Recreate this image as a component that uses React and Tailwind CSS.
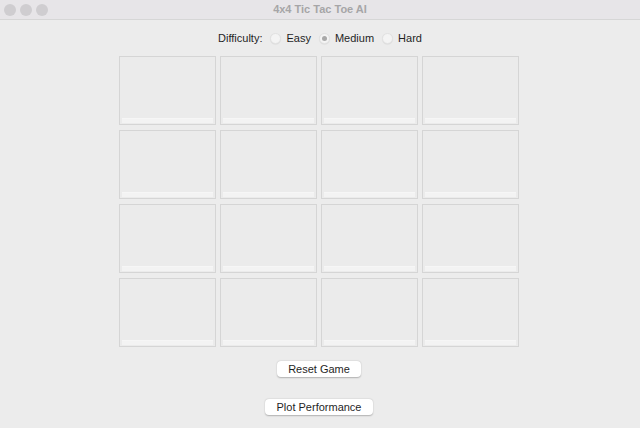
import React, { useState } from 'react';

function Radio({ label, checked, onSelect }) {
  return (
    <label className="flex items-center gap-[5px] cursor-default" onClick={onSelect}>
      <span className="w-[11px] h-[11px] rounded-full bg-[#f4f4f4] border border-[#e2e2e2] shadow-[0_0.5px_1px_rgba(0,0,0,0.08)] flex items-center justify-center">
        {checked && <span className="w-[5px] h-[5px] rounded-full bg-[#a9a9a9]" />}
      </span>
      <span>{label}</span>
    </label>
  );
}

function Cell() {
  return (
    <div className="w-[97px] h-[69px] border border-[#d5d5d5] bg-[#ebebeb] flex flex-col">
      <div className="flex-1" />
      <div className="h-[5px] mx-[2px] mb-[1px] bg-[#f3f3f3] border-t border-[#f6f6f6]" />
    </div>
  );
}

export default function App() {
  const [difficulty, setDifficulty] = useState('Medium');
  const cells = Array.from({ length: 16 });

  return (
    <div className="w-[640px] h-[428px] bg-[#ececec] flex flex-col overflow-hidden" style={{ fontFamily: '"Liberation Sans", Arial, sans-serif' }}>
      <div className="h-[20px] bg-[#e7e5e8] border-b border-[#d6d6d6] flex items-center relative">
        <div className="flex items-center gap-[4px] pl-[4px]">
          <span className="w-[12px] h-[12px] rounded-full bg-[#cfcdd0]" />
          <span className="w-[12px] h-[12px] rounded-full bg-[#cfcdd0]" />
          <span className="w-[12px] h-[12px] rounded-full bg-[#cfcdd0]" />
        </div>
        <div className="flex-1 text-center text-[11px] font-bold text-[#a6a5a7] pr-[48px]">4x4 Tic Tac Toe AI</div>
      </div>

      <div className="flex justify-center items-center gap-[8px] mt-[10px] h-[16px] text-[11px] text-[#1f1f1f]">
        <span>Difficulty:</span>
        {['Easy', 'Medium', 'Hard'].map((d) => (
          <Radio key={d} label={d} checked={difficulty === d} onSelect={() => setDifficulty(d)} />
        ))}
      </div>

      <div className="flex justify-center mt-[10px]">
        <div className="grid grid-cols-4 gap-x-[4px] gap-y-[5px] ml-[-2px]">
          {cells.map((_, i) => (
            <Cell key={i} />
          ))}
        </div>
      </div>

      <div className="flex flex-col items-center mt-[14px] text-[11px] text-[#1f1f1f]">
        <button className="w-[84px] h-[16px] bg-white rounded-[4px] shadow-[0_0.5px_1.5px_rgba(0,0,0,0.25)] leading-none ml-[-2px]">Reset Game</button>
        <button className="w-[108px] h-[16px] bg-white rounded-[4px] shadow-[0_0.5px_1.5px_rgba(0,0,0,0.25)] leading-none mt-[22px] ml-[-2px]">Plot Performance</button>
      </div>
    </div>
  );
}
